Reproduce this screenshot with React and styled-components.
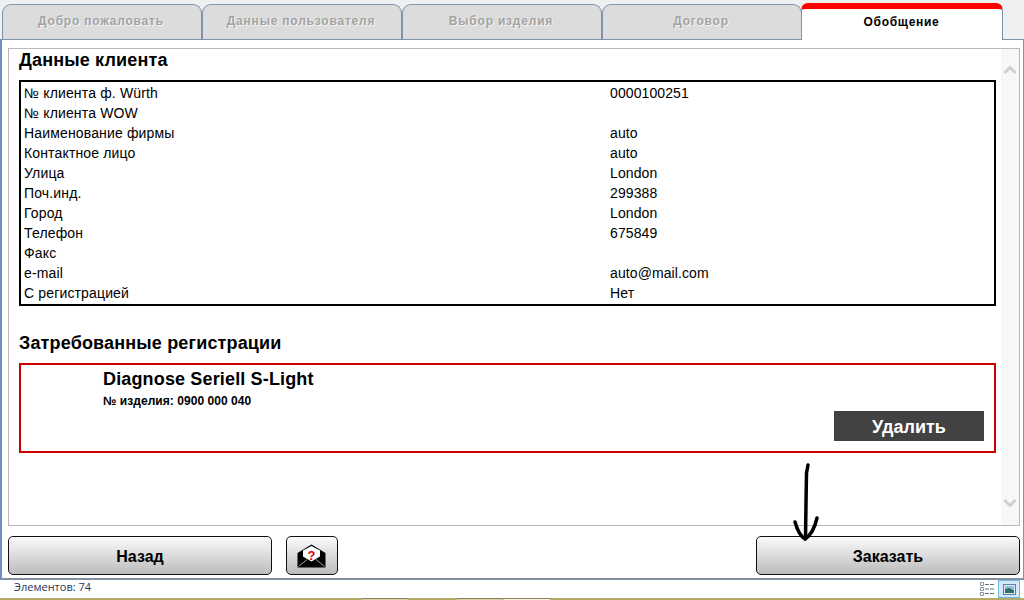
import React from "react";
import styled, { createGlobalStyle } from "styled-components";

const GlobalStyle = createGlobalStyle`
  html, body { margin: 0; padding: 0; background: #f0f0f0; }
  body { font-family: "Liberation Sans", Arial, sans-serif; }
  * { box-sizing: border-box; }
`;

const tabs = ["Добро пожаловать", "Данные пользователя", "Выбор изделия", "Договор"];

const clientRows = [
  ["№ клиента ф. Würth", "0000100251"],
  ["№ клиента WOW", ""],
  ["Наименование фирмы", "auto"],
  ["Контактное лицо", "auto"],
  ["Улица", "London"],
  ["Поч.инд.", "299388"],
  ["Город", "London"],
  ["Телефон", "675849"],
  ["Факс", ""],
  ["e-mail", "auto@mail.com"],
  ["С регистрацией", "Нет"],
];

const App = () => {
  return (
    <Page>
      <GlobalStyle />
      <TabBar>
        {tabs.map((t) => (
          <Tab key={t}>{t}</Tab>
        ))}
        <ActiveTab>Обобщение</ActiveTab>
      </TabBar>
      <Panel>
        <Content>
          <Scroll>
            <Heading>Данные клиента</Heading>
            <ClientTable>
              {clientRows.map(([label, value]) => (
                <Row key={label}>
                  <Label>{label}</Label>
                  <Value>{value}</Value>
                </Row>
              ))}
            </ClientTable>
            <SecondHeading>Затребованные регистрации</SecondHeading>
            <Card>
              <CardTitle>Diagnose Seriell S-Light</CardTitle>
              <CardSub>№ изделия: 0900 000 040</CardSub>
              <DeleteButton>Удалить</DeleteButton>
            </Card>
          </Scroll>
          <ScrollTrack>
            <Chevron viewBox="0 0 14 10">
              <path d="M1.5 8 L7 2.5 L12.5 8" />
            </Chevron>
            <Chevron viewBox="0 0 14 10">
              <path d="M1.5 2 L7 7.5 L12.5 2" />
            </Chevron>
          </ScrollTrack>
        </Content>
        <Footer>
          <FooterLeft>
            <BackButton>Назад</BackButton>
            <MailButton aria-label="help">
              <svg width="30" height="24" viewBox="0 0 30 24">
                <path d="M14.5 0.5 L28.5 9 L28.5 23.5 L0.5 23.5 L0.5 9 Z" fill="#000" />
                <path d="M6 6.5 L14.5 2 L23 6.5 L23 12.5 L14.5 17.5 L6 12.5 Z" fill="#fff" />
                <path d="M1.5 22.5 L10 15.5 M27.5 22.5 L19 15.5" stroke="#cfcfcf" strokeWidth="0.8" />
                <QuestionMark x="14.5" y="15.5" textAnchor="middle">?</QuestionMark>
              </svg>
            </MailButton>
          </FooterLeft>
          <OrderButton>Заказать</OrderButton>
        </Footer>
        <Arrow width="32" height="84" viewBox="0 0 32 84">
          <path d="M19 2 L17.5 10 L17 40 L16.5 76" />
          <path d="M6 59 C8 66 11 73 16 76 C21 73 25 68 28 55" />
        </Arrow>
      </Panel>
      <StatusBar>
        <StatusText>Элементов: 74</StatusText>
        <ViewIcons>
          <svg width="15" height="14" viewBox="0 0 15 14">
            <path d="M5 2.5h4M10 2.5h4M5 7h4M10 7h4M5 11.5h4M10 11.5h4" stroke="#5f6f80" />
            <path d="M0.5 0.5h3v3h-3zM0.5 5.5h3v3h-3zM0.5 10.5h3v3h-3z" fill="none" stroke="#8a97a6" />
          </svg>
          <ActiveView>
            <svg width="13" height="11" viewBox="0 0 13 11">
              <rect x="0.5" y="0.5" width="12" height="10" fill="#dceaf5" stroke="#5f7f9c" />
              <path d="M2 2h9v3H2z" fill="#8fc3e8" />
              <path d="M2 5l4-1 5 2v3H2z" fill="#2f6f6a" />
            </svg>
          </ActiveView>
        </ViewIcons>
      </StatusBar>
      <BottomEdge>
        <TaskButton $left={362} />
        <TaskButton $left={49} />
        <TaskButton $left={1} $active />
      </BottomEdge>
    </Page>
  );
};

export default App;

const Page = styled.div`
  width: 1024px;
  height: 600px;
  overflow: hidden;
  display: flex;
  flex-direction: column;
  background: #f0f0f0;
`;

const TabBar = styled.div`
  height: 39px;
  flex: none;
  display: flex;
  align-items: flex-end;
  padding-left: 2px;
`;

const Tab = styled.div`
  width: 200px;
  height: 35px;
  border: 1px solid #7f93ad;
  border-bottom: none;
  border-radius: 9px 9px 0 0;
  background: #dcdcdc;
  color: #a3a3a3;
  font-size: 12px;
  font-weight: bold;
  letter-spacing: 0.8px;
  text-align: center;
  line-height: 33px;
  padding-right: 2px;
  text-shadow: 1px 1px 0 #f4f4f4;
`;

const ActiveTab = styled.div`
  width: 202px;
  height: 37px;
  margin-left: -1px;
  border: 1px solid #7f93ad;
  border-top: 6px solid #ff0000;
  border-bottom: none;
  border-radius: 7px 7px 0 0;
  background: #fff;
  color: #000;
  font-size: 12px;
  font-weight: bold;
  letter-spacing: 0.7px;
  text-align: center;
  line-height: 27px;
  padding-right: 1px;
  margin-bottom: -1px;
  position: relative;
  z-index: 1;
`;

const Panel = styled.div`
  position: relative;
  height: 541px;
  flex: none;
  background: #fff;
  border: 1px solid #7f93ad;
  border-left: 2px solid #6f8fc4;
  border-right-width: 1px;
  border-bottom: 2px solid #8290a0;
  padding: 8px 3px 0 6px;
  display: flex;
  flex-direction: column;
`;

const Content = styled.div`
  height: 478px;
  flex: none;
  border: 1px solid #b9b9b9;
  display: flex;
`;

const Scroll = styled.div`
  flex: 1;
  padding: 0 5px 0 10px;
`;

const ScrollTrack = styled.div`
  width: 18px;
  flex: none;
  background: #f7f7f7;
  display: flex;
  flex-direction: column;
  justify-content: space-between;
  align-items: center;
  padding: 16px 0 17px;
`;

const Chevron = styled.svg`
  width: 14px;
  height: 10px;
  fill: none;
  stroke: #cfcfcf;
  stroke-width: 3;
`;

const Heading = styled.h2`
  margin: 0;
  font-size: 18px;
  line-height: 22px;
  font-weight: bold;
  color: #000;
  letter-spacing: 0.16px;
`;

const SecondHeading = styled(Heading)`
  margin-top: 26px;
`;

const ClientTable = styled.div`
  margin-top: 9px;
  width: 977px;
  height: 226px;
  border: 2px solid #000;
  padding: 1px 3px;
`;

const Row = styled.div`
  height: 20px;
  display: flex;
  font-size: 14px;
  line-height: 20px;
  color: #000;
`;

const Label = styled.span`
  width: 586px;
  flex: none;
  letter-spacing: 0.15px;
`;

const Value = styled.span`
  letter-spacing: 0.1px;
`;

const Card = styled.div`
  position: relative;
  margin-top: 9px;
  width: 977px;
  height: 90px;
  border: 2px solid #cc0000;
  padding: 3px 0 0 82px;
`;

const CardTitle = styled.div`
  font-size: 18px;
  line-height: 22px;
  font-weight: bold;
  color: #000;
  letter-spacing: 0.15px;
`;

const CardSub = styled.div`
  margin-top: 4px;
  font-size: 12px;
  line-height: 15px;
  font-weight: bold;
  color: #000;
  letter-spacing: 0.05px;
`;

const DeleteButton = styled.button`
  position: absolute;
  right: 10px;
  bottom: 10px;
  width: 150px;
  height: 30px;
  border: none;
  background: #424242;
  color: #fff;
  font-family: inherit;
  font-size: 18px;
  font-weight: bold;
  padding: 2px 0 0;
`;

const Footer = styled.div`
  display: flex;
  justify-content: space-between;
  margin-top: 10px;
`;

const FooterLeft = styled.div`
  display: flex;
  gap: 14px;
`;

const GradientButton = styled.button`
  height: 39px;
  border: 1px solid #111;
  border-radius: 5px;
  background: linear-gradient(#fbfbfb, #bcbcbc);
  color: #000;
  font-family: inherit;
  font-size: 16px;
  font-weight: bold;
  padding: 2px 0 0;
`;

const BackButton = styled(GradientButton)`
  width: 264px;
`;

const OrderButton = styled(GradientButton)`
  width: 264px;
`;

const MailButton = styled(GradientButton)`
  width: 52px;
  padding: 0;
  display: flex;
  align-items: center;
  justify-content: center;
`;

const QuestionMark = styled.text`
  font-size: 13px;
  font-weight: bold;
  fill: #e00000;
`;

const Arrow = styled.svg`
  position: absolute;
  left: 787px;
  top: 423px;
  fill: none;
  stroke: #000;
  stroke-width: 3.5;
  stroke-linecap: round;
  stroke-linejoin: round;
`;

const StatusBar = styled.div`
  height: 18px;
  flex: none;
  background: #fff;
  display: flex;
  justify-content: space-between;
  align-items: center;
  padding: 0 4px 0 14px;
`;

const StatusText = styled.span`
  font-family: "Open Sans", sans-serif;
  font-size: 11px;
  line-height: 14px;
  padding-bottom: 4px;
  color: #1e395b;
`;

const ViewIcons = styled.div`
  display: flex;
  align-items: center;
  gap: 3px;
`;

const ActiveView = styled.div`
  width: 22px;
  height: 18px;
  border: 1px solid #6cb8e8;
  background: #d5e8f7;
  display: flex;
  align-items: center;
  justify-content: center;
`;

const BottomEdge = styled.div`
  height: 2px;
  flex: none;
  background: #b5aa66;
  display: flex;
`;

const TaskButton = styled.div`
  width: 46px;
  margin-left: ${(props) => props.$left}px;
  border-top: 1px solid #8a8258;
  background: ${(props) => (props.$active ? "#f4f1e2" : "#d9d1a4")};
`;
